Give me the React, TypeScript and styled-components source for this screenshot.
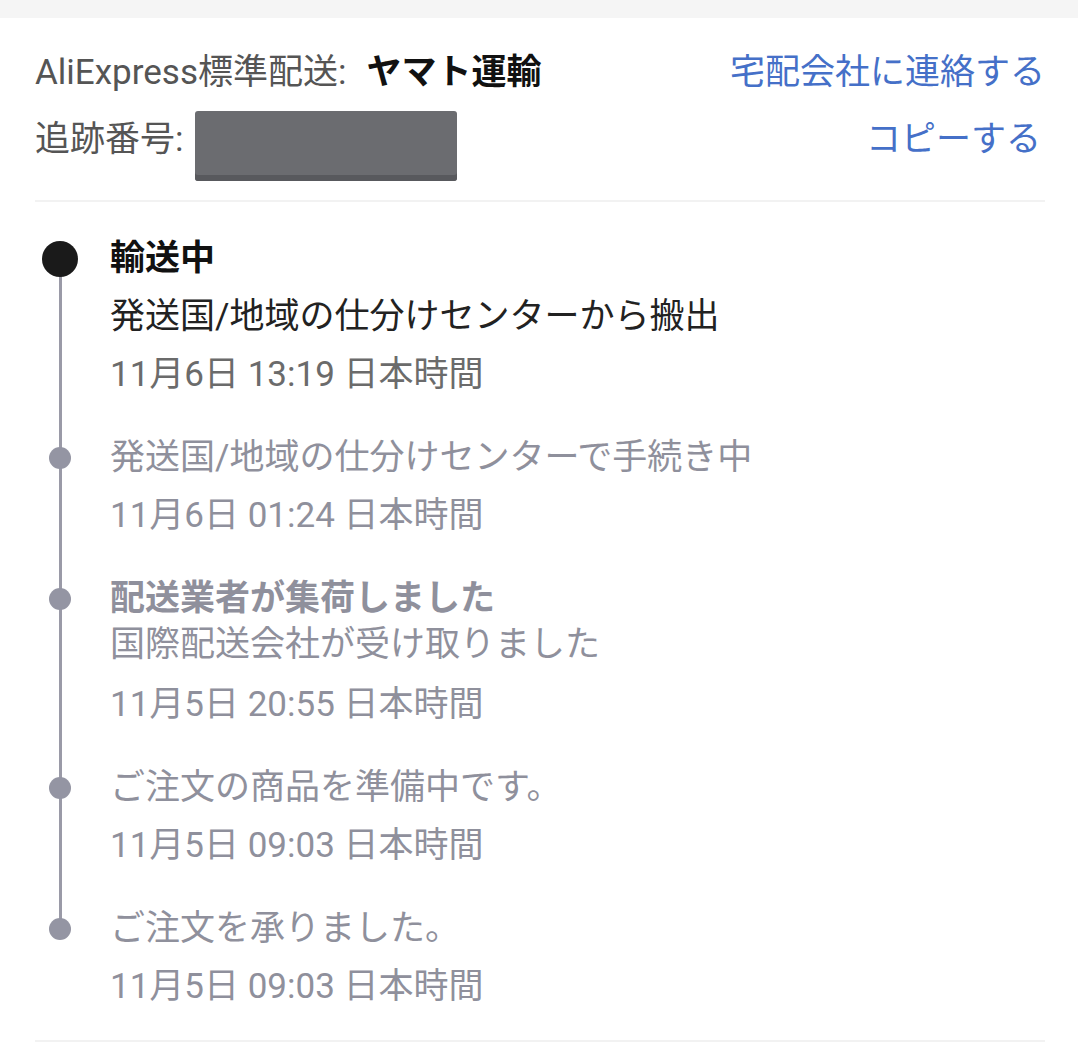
import React from 'react'
import styled, { createGlobalStyle } from 'styled-components'

const GlobalStyle = createGlobalStyle`
  html, body {
    margin: 0;
    padding: 0;
    background: #ffffff;
  }
  body {
    font-family: Roboto, "Noto Sans CJK JP", "Noto Sans", sans-serif;
    -webkit-font-smoothing: antialiased;
  }
`

const Page = styled.div`
  width: 1078px;
  min-height: 1047px;
  background: #ffffff;
  border-top: 18px solid #f5f5f5;
  box-sizing: border-box;
`

const Card = styled.div`
  padding: 0 33px 0 35px;
`

const Header = styled.div`
  padding: 26px 0 19px;
  border-bottom: 2px solid #f2f2f2;
`

const HeaderRow = styled.div<{ $offset?: number }>`
  display: flex;
  align-items: flex-start;
  justify-content: space-between;
  margin-top: ${p => p.$offset ?? 0}px;
  font-size: 35px;
  line-height: 58px;
`

const Label = styled.div`
  display: flex;
  align-items: flex-start;
  color: #555555;
`

const Carrier = styled.span`
  color: #111111;
  font-weight: 700;
  margin-left: 20px;
`

const Masked = styled.div`
  width: 262px;
  height: 70px;
  margin-left: 12px;
  background: #6b6c70;
  border-radius: 3px;
  box-shadow: inset 0 -6px 0 #58595d;
`

const Link = styled.a<{ $inset?: number }>`
  color: #4570c8;
  text-decoration: none;
  cursor: pointer;
  margin-right: ${p => p.$inset ?? 0}px;
`

const Timeline = styled.ul`
  list-style: none;
  margin: 0;
  padding: 28px 0 24px;
  border-bottom: 2px solid #f2f2f2;
`

const Item = styled.li<{ $last?: boolean }>`
  display: grid;
  grid-template-columns: 75px 1fr;
  padding-bottom: ${p => (p.$last ? 0 : 25)}px;
`

const Rail = styled.div<{ $first?: boolean; $last?: boolean }>`
  position: relative;

  &::before {
    content: '';
    display: ${p => (p.$last ? 'none' : 'block')};
    position: absolute;
    left: 24px;
    top: 29px;
    bottom: -25px;
    width: 3px;
    background: #9a9aa7;
  }

  &::after {
    content: '';
    display: ${p => (p.$first ? 'none' : 'block')};
    position: absolute;
    left: 24px;
    top: 0;
    height: 29px;
    width: 3px;
    background: #9a9aa7;
  }
`

const Dot = styled.span<{ $active?: boolean }>`
  position: absolute;
  z-index: 1;
  left: ${p => (p.$active ? 7 : 14)}px;
  top: ${p => (p.$active ? 11 : 18)}px;
  width: ${p => (p.$active ? 36 : 22)}px;
  height: ${p => (p.$active ? 36 : 22)}px;
  border-radius: 50%;
  background: ${p => (p.$active ? '#1a1a1a' : '#9495a3')};
`

const Body = styled.div`
  display: flex;
  flex-direction: column;
  font-size: 35px;
`

const Title = styled.div<{ $active?: boolean; $bold?: boolean; $tight?: boolean }>`
  line-height: ${p => (p.$tight ? 46 : 58)}px;
  font-weight: ${p => (p.$bold ? 700 : 400)};
  color: ${p => (p.$active ? (p.$bold ? '#111111' : '#222222') : '#8f909c')};
`

const Time = styled.div<{ $active?: boolean; $gap?: number }>`
  line-height: 58px;
  margin-top: ${p => p.$gap ?? 0}px;
  color: ${p => (p.$active ? '#6b6b6b' : '#8f909c')};
`

const Group = styled.div<{ $tight?: boolean }>`
  display: flex;
  flex-direction: column;
  padding-top: ${p => (p.$tight ? 6 : 0)}px;
`

type Event = {
  title: string
  detail?: string
  time: string
  bold?: boolean
}

const events: Event[] = [
  { title: '輸送中', detail: '発送国/地域の仕分けセンターから搬出', time: '11月6日 13:19 日本時間', bold: true },
  { title: '発送国/地域の仕分けセンターで手続き中', time: '11月6日 01:24 日本時間' },
  { title: '配送業者が集荷しました', detail: '国際配送会社が受け取りました', time: '11月5日 20:55 日本時間', bold: true },
  { title: 'ご注文の商品を準備中です。', time: '11月5日 09:03 日本時間' },
  { title: 'ご注文を承りました。', time: '11月5日 09:03 日本時間' },
]

export default function App() {
  return (
    <Page>
      <GlobalStyle />
      <Card>
        <Header>
          <HeaderRow>
            <Label>
              AliExpress標準配送:<Carrier>ヤマト運輸</Carrier>
            </Label>
            <Link>宅配会社に連絡する</Link>
          </HeaderRow>
          <HeaderRow $offset={9}>
            <Label>
              追跡番号:
              <Masked />
            </Label>
            <Link $inset={4}>コピーする</Link>
          </HeaderRow>
        </Header>

        <Timeline>
          {events.map((ev, i) => {
            const active = i === 0
            const first = i === 0
            const last = i === events.length - 1
            const tight = !active && !!ev.detail
            return (
              <Item key={i} $last={last}>
                <Rail $first={first} $last={last}>
                  <Dot $active={active} />
                </Rail>
                <Body>
                  <Group $tight={tight}>
                    <Title $active={active} $bold={ev.bold} $tight={tight}>
                      {ev.title}
                    </Title>
                    {ev.detail && (
                      <Title $active={active} $tight={tight}>
                        {ev.detail}
                      </Title>
                    )}
                  </Group>
                  <Time $active={active} $gap={tight ? 8 : 0}>{ev.time}</Time>
                </Body>
              </Item>
            )
          })}
        </Timeline>
      </Card>
    </Page>
  )
}
